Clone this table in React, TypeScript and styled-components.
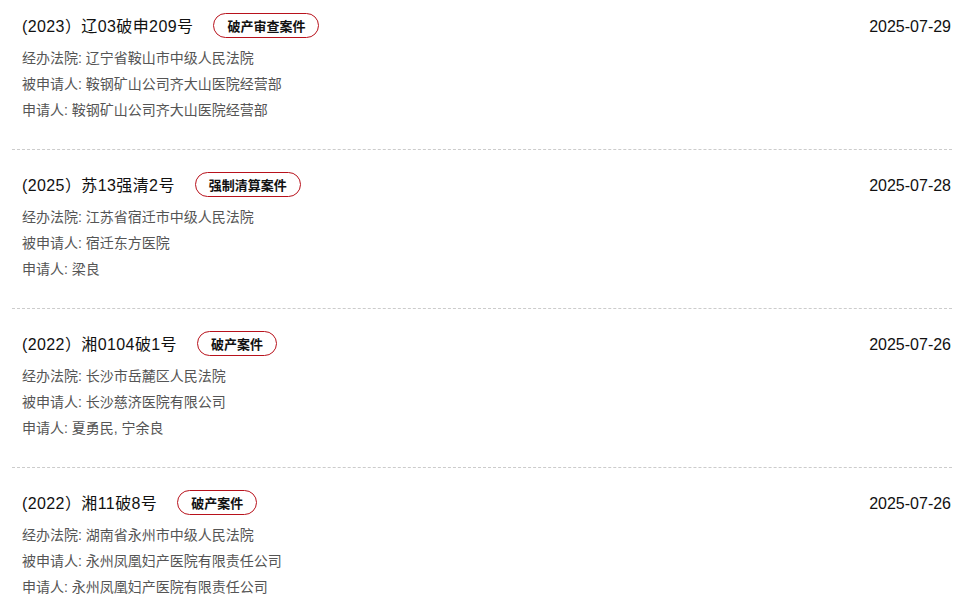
import styled, { createGlobalStyle } from 'styled-components';

const GlobalStyle = createGlobalStyle`
  body {
    margin: 0;
    background: #ffffff;
    font-family: "Liberation Sans", "Noto Sans CJK SC", sans-serif;
  }
`;

const List = styled.ul`
  list-style: none;
  margin: 0;
  padding: 0 19px 0 12px;
`;

const Item = styled.li`
  padding: 23px 1px 26px 10px;
  border-bottom: 1px dashed #cccccc;

  &:first-child {
    padding-top: 14px;
  }
`;

const Header = styled.div`
  display: flex;
  align-items: center;
  height: 22px;
`;

const Title = styled.span`
  padding-top: 3px;
  font-size: 16px;
  letter-spacing: 0.4px;
  color: #111111;
  line-height: 22px;
`;

const Tag = styled.span`
  margin-left: 20px;
  height: 23px;
  padding: 0 13px;
  display: inline-flex;
  align-items: center;
  border: 1px solid #b8121c;
  border-radius: 13px;
  font-size: 13px;
  font-weight: 700;
  color: #111111;
`;

const Date = styled.span`
  margin-left: auto;
  padding-top: 3px;
  font-size: 16px;
  line-height: 22px;
  color: #111111;
`;

const Details = styled.div`
  margin-top: 9px;
`;

const Line = styled.div`
  font-size: 14px;
  line-height: 26px;
  color: #555555;
`;

type CaseItem = {
  title: string;
  tag: string;
  date: string;
  court: string;
  respondent: string;
  applicant: string;
};

const cases: CaseItem[] = [
  {
    title: '(2023）辽03破申209号',
    tag: '破产审查案件',
    date: '2025-07-29',
    court: '辽宁省鞍山市中级人民法院',
    respondent: '鞍钢矿山公司齐大山医院经营部',
    applicant: '鞍钢矿山公司齐大山医院经营部',
  },
  {
    title: '(2025）苏13强清2号',
    tag: '强制清算案件',
    date: '2025-07-28',
    court: '江苏省宿迁市中级人民法院',
    respondent: '宿迁东方医院',
    applicant: '梁良',
  },
  {
    title: '(2022）湘0104破1号',
    tag: '破产案件',
    date: '2025-07-26',
    court: '长沙市岳麓区人民法院',
    respondent: '长沙慈济医院有限公司',
    applicant: '夏勇民, 宁余良',
  },
  {
    title: '(2022）湘11破8号',
    tag: '破产案件',
    date: '2025-07-26',
    court: '湖南省永州市中级人民法院',
    respondent: '永州凤凰妇产医院有限责任公司',
    applicant: '永州凤凰妇产医院有限责任公司',
  },
];

export default function App() {
  return (
    <>
      <GlobalStyle />
      <List lang="zh-CN">
        {cases.map((c) => (
          <Item key={c.title}>
            <Header>
              <Title>{c.title}</Title>
              <Tag>{c.tag}</Tag>
              <Date>{c.date}</Date>
            </Header>
            <Details>
              <Line>经办法院: {c.court}</Line>
              <Line>被申请人: {c.respondent}</Line>
              <Line>申请人: {c.applicant}</Line>
            </Details>
          </Item>
        ))}
      </List>
    </>
  );
}
